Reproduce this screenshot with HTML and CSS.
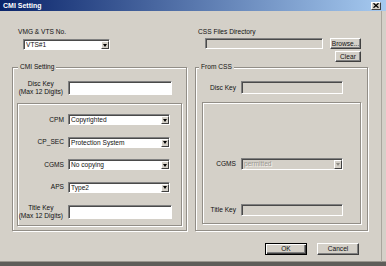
FILE: index.html
```html
<!DOCTYPE html>
<html>
<head>
<meta charset="utf-8">
<title>CMI Setting</title>
<link rel="stylesheet" href="styles.css">
</head>
<body>
<div class="dialog">
  <div class="titlebar">
    <span class="title">CMI Setting</span>
    <span class="close"><svg width="6" height="5" viewBox="0 0 6 5"><path d="M0.5 0.3 L5.5 4.7 M5.5 0.3 L0.5 4.7" stroke="#000" stroke-width="1.3"/></svg></span>
  </div>
  <div class="client">
    <div class="top">
      <div class="top-left">
        <div class="vmg-label">VMG &amp; VTS No.</div>
        <div class="combo vmg-combo"><span class="combo-text">VTS#1</span><span class="drop"></span></div>
      </div>
      <div class="top-right">
        <div class="dir-label">CSS Files Directory</div>
        <div class="field field-disabled"></div>
        <div class="button">Browse...</div>
        <div class="button clear">Clear</div>
      </div>
    </div>
    <div class="groups">
      <div class="group group-cmi">
        <div class="group-title">CMI Setting</div>
        <div class="row key-row cmi-key">
          <div class="key-label"><span>Disc Key<br>(Max 12 Digits)</span></div>
          <div class="field key-field"></div>
        </div>
        <div class="panel cmi-panel">
          <div class="row combo-row"><span class="row-label">CPM</span><div class="combo"><span class="combo-text">Copyrighted</span><span class="drop"></span></div></div>
          <div class="row combo-row"><span class="row-label">CP_SEC</span><div class="combo"><span class="combo-text">Protection System</span><span class="drop"></span></div></div>
          <div class="row combo-row"><span class="row-label">CGMS</span><div class="combo"><span class="combo-text">No copying</span><span class="drop"></span></div></div>
          <div class="row combo-row"><span class="row-label">APS</span><div class="combo"><span class="combo-text">Type2</span><span class="drop"></span></div></div>
          <div class="row key-row title-row">
            <div class="key-label"><span>Title Key<br>(Max 12 Digits)</span></div>
            <div class="field key-field"></div>
          </div>
        </div>
      </div>
      <div class="group group-css">
        <div class="group-title">From CSS</div>
        <div class="row css-key">
          <span class="row-label">Disc Key</span>
          <div class="field field-disabled"></div>
        </div>
        <div class="panel css-panel">
          <div class="row css-cgms">
            <span class="row-label">CGMS</span>
            <div class="combo combo-disabled"><span class="combo-text">permitted</span><span class="drop"></span></div>
          </div>
          <div class="row css-title">
            <span class="row-label">Title Key</span>
            <div class="field field-disabled"></div>
          </div>
        </div>
      </div>
    </div>
    <div class="buttons">
      <div class="button default">OK</div>
      <div class="button">Cancel</div>
    </div>
  </div>
</div>
</body>
</html>
```

FILE: styles.css
```css
* { box-sizing: border-box; }
html, body { margin: 0; padding: 0; }
body {
  background: #d4d0c8;
  font-family: "Liberation Sans", Arial, sans-serif;
  font-size: 6.6px;
  line-height: 8px;
  color: #111;
}
.dialog {
  width: 386px;
  height: 266px;
  background: #d4d0c8;
  border-bottom: 4px solid #5e5d59;
  box-shadow: inset 0 -1px 0 #9a968e;
  display: flex;
  flex-direction: column;
  overflow: hidden;
}
.titlebar {
  height: 11px;
  flex: none;
  display: flex;
  align-items: center;
  justify-content: space-between;
  padding: 0 5px 0 3px;
  background: linear-gradient(to right, #0a246a, #a6caf0);
}
.title { color: #fff; font-weight: bold; font-size: 7px; }
.close {
  width: 10px;
  height: 8px;
  background: #d4d0c8;
  border: 1px solid;
  border-color: #fff #404040 #404040 #fff;
  display: flex;
  align-items: center;
  justify-content: center;
}
.close svg { display: block; }
.client {
  flex: 1;
  width: 382px;
  border-right: 1px solid #a9a59d;
  padding-left: 12px;
}
.top { display: flex; height: 51px; }
.top-left { width: 183px; padding-top: 17px; }
.vmg-label { margin-left: 6px; }
.vmg-combo { margin: 3px 0 0 11px; width: 87px; }
.top-right {
  padding-top: 17px;
  margin-left: 10px;
  display: grid;
  grid-template-columns: 118px 31px;
  grid-template-rows: 8px 11px 11px;
  column-gap: 7px;
  row-gap: 2px;
  align-content: start;
}
.dir-label { grid-column: 1 / -1; margin-left: -7px; }
.clear { grid-column: 2; justify-self: end; width: 26px; }

.field {
  background: #fff;
  border: 1px solid;
  border-color: #808080 #fff #fff #808080;
  box-shadow: inset 1px 1px 0 #4a4a4a;
}
.field-disabled { background: #d4d0c8; }

.combo {
  height: 11px;
  display: flex;
  align-items: stretch;
  background: #fff;
  border: 1px solid;
  border-color: #808080 #fff #fff #808080;
  box-shadow: inset 1px 1px 0 #4a4a4a;
  padding: 1px 0 0 2px;
}
.combo-text { flex: 1; line-height: 8px; white-space: nowrap; overflow: hidden; }
.drop {
  width: 8px;
  flex: none;
  background: #d4d0c8;
  border: 1px solid;
  border-color: #fff #404040 #404040 #fff;
  display: flex;
  align-items: center;
  justify-content: center;
}
.drop::after {
  content: "";
  border-top: 3px solid #000;
  border-left: 2.5px solid transparent;
  border-right: 2.5px solid transparent;
}
.combo-disabled { background: #d4d0c8; }
.combo-disabled .combo-text { color: #9a9790; text-shadow: 1px 1px 0 #f4f2ee; }
.combo-disabled .drop::after { border-top-color: #8c8a85; }

.button {
  display: flex;
  align-items: center;
  justify-content: center;
  background: #d4d0c8;
  border: 1px solid;
  border-color: #fff #404040 #404040 #fff;
  box-shadow: inset -1px -1px 0 #808080;
}
.button.default {
  border: 1px solid #000;
  box-shadow: inset 1px 1px 0 #fff, inset -1px -1px 0 #404040, inset -2px -2px 0 #808080;
}

.groups { display: flex; gap: 8px; margin-top: 5px; }
.group, .panel {
  border: 1px solid #928e87;
  box-shadow: 1px 1px 0 #fff, inset 1px 1px 0 #fff;
}
.group { height: 164px; }
.group-cmi { width: 175px; }
.group-css { width: 173px; }
.group-title {
  width: fit-content;
  height: 8px;
  margin: -5px 0 0 5px;
  padding: 0 2px;
  background: #d4d0c8;
}
.group-css .group-title { margin-left: 3px; }

.row { display: flex; align-items: center; gap: 5px; }
.row-label { text-align: right; flex: none; }
.key-label { display: flex; justify-content: flex-end; text-align: center; flex: none; }
.key-row { height: 16px; }
.key-field { width: 104px; height: 14px; }
.cmi-key { margin-top: 9px; }
.cmi-key .key-label { width: 50px; }

.cmi-panel {
  margin: 7px 0 0 4px;
  width: 165px;
  height: 123px;
  padding-top: 10px;
  display: flex;
  flex-direction: column;
  gap: 11.5px;
}
.combo-row { gap: 4px; height: 11px; }
.combo-row .row-label { width: 46px; }
.combo-row .combo { width: 102px; }
.title-row .key-label { width: 45px; }

.css-key { margin-top: 10px; height: 13px; }
.css-key .row-label { width: 40px; }
.css-key .field { width: 102px; height: 13px; }
.css-panel { margin: 8px 0 0 6px; width: 159px; height: 122px; }
.css-panel .row-label { width: 33px; }
.css-cgms { margin-top: 55px; height: 12px; }
.css-cgms .combo { width: 102px; height: 12px; }
.css-title { margin-top: 34px; height: 12px; }
.css-title .field { width: 102px; height: 12px; }

.buttons { display: flex; gap: 10px; margin: 12px 0 0 253px; }
.buttons .button { width: 42px; height: 12px; }
```
